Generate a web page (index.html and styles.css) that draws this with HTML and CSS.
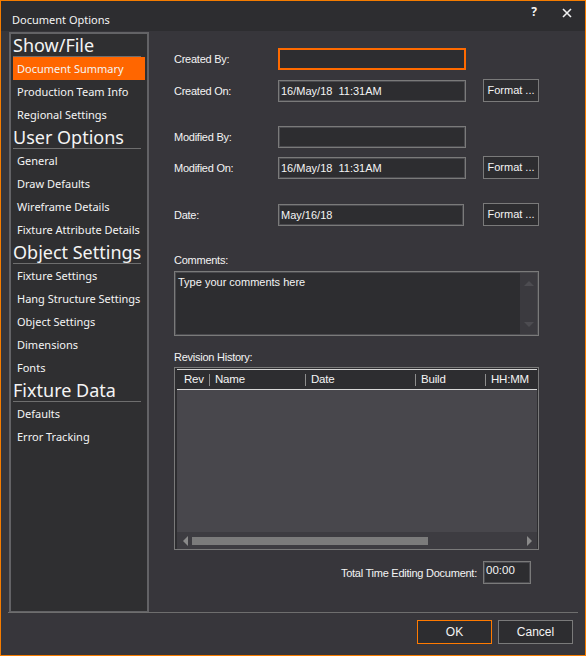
FILE: index.html
```html
<!DOCTYPE html>
<html lang="en">
  <head>
    <meta charset="UTF-8" />
    <meta name="viewport" content="width=device-width, initial-scale=1" />
    <title>Document Options</title>
    <link rel="stylesheet" href="styles.css">
  </head>
  <body>
    <div class="dialog">
      <div class="titlebar">
        <span class="title">Document Options</span>
        <span class="tb-help">?</span>
        <span class="tb-close">
          <svg width="10" height="10" viewBox="0 0 10 10">
            <path d="M1 1 L9 9 M9 1 L1 9" stroke="#f1f1f1" stroke-width="1.6" />
          </svg>
        </span>
      </div>

      <div class="content">
        <nav class="nav">
          <div class="nav-head">Show/File</div>
          <div class="nav-item selected">Document Summary</div>
          <div class="nav-item">Production Team Info</div>
          <div class="nav-item">Regional Settings</div>
          <div class="nav-head">User Options</div>
          <div class="nav-item">General</div>
          <div class="nav-item">Draw Defaults</div>
          <div class="nav-item">Wireframe Details</div>
          <div class="nav-item">Fixture Attribute Details</div>
          <div class="nav-head">Object Settings</div>
          <div class="nav-item">Fixture Settings</div>
          <div class="nav-item">Hang Structure Settings</div>
          <div class="nav-item">Object Settings</div>
          <div class="nav-item">Dimensions</div>
          <div class="nav-item">Fonts</div>
          <div class="nav-head">Fixture Data</div>
          <div class="nav-item">Defaults</div>
          <div class="nav-item">Error Tracking</div>
        </nav>

        <section class="form">
          <div class="row row-created-by">
            <span class="label">Created By:</span>
            <div class="field focus"></div>
          </div>
          <div class="row row-created-on">
            <span class="label">Created On:</span>
            <div class="field">16/May/18  11:31AM</div>
            <div class="btn-format">Format ...</div>
          </div>
          <div class="row row-modified-by">
            <span class="label">Modified By:</span>
            <div class="field"></div>
          </div>
          <div class="row row-modified-on">
            <span class="label">Modified On:</span>
            <div class="field">16/May/18  11:31AM</div>
            <div class="btn-format">Format ...</div>
          </div>
          <div class="row row-date">
            <span class="label">Date:</span>
            <div class="field short">May/16/18</div>
            <div class="btn-format">Format ...</div>
          </div>

          <div class="label block comments-label">Comments:</div>
          <div class="comments">
            <div class="comments-text">Type your comments here</div>
            <div class="vscroll">
              <svg width="10" height="6" viewBox="0 0 10 6"><polygon points="0,6 5,1 10,6" fill="#4d4c51" /></svg>
              <svg width="10" height="6" viewBox="0 0 10 6"><polygon points="0,0 5,5 10,0" fill="#4d4c51" /></svg>
            </div>
          </div>

          <div class="label block history-label">Revision History:</div>
          <div class="history">
            <div class="history-head">
              <span class="col col-rev">Rev</span>
              <span class="sep"></span>
              <span class="col col-name">Name</span>
              <span class="sep"></span>
              <span class="col col-date">Date</span>
              <span class="sep"></span>
              <span class="col col-build">Build</span>
              <span class="sep"></span>
              <span class="col col-time">HH:MM</span>
            </div>
            <div class="history-body"></div>
            <div class="hscroll">
              <svg width="6" height="10" viewBox="0 0 6 10"><polygon points="5,0 0,5 5,10" fill="#8a8a8a" /></svg>
              <div class="hthumb"></div>
              <svg width="6" height="10" viewBox="0 0 6 10"><polygon points="1,0 6,5 1,10" fill="#8a8a8a" /></svg>
            </div>
          </div>

          <div class="total-row">
            <span class="label">Total Time Editing Document:</span>
            <div class="field total">00:00</div>
          </div>
        </section>
      </div>

      <div class="footer">
        <div class="btn ok">OK</div>
        <div class="btn">Cancel</div>
      </div>
    </div>
  </body>
</html>
```

FILE: styles.css
```css
body {
  margin: 0;
  background: #37363b;
}

.dialog {
  width: 586px;
  height: 656px;
  box-sizing: border-box;
  border: 1px solid #f57c00;
  background: #37363b;
  display: flex;
  flex-direction: column;
  color: #f4f4f4;
  font-family: "Liberation Sans", Arial, sans-serif;
  font-size: 11px;
}

/* Title bar */
.titlebar {
  height: 30px;
  flex: none;
  display: flex;
  align-items: flex-start;
  background: #2d2d30;
  font-family: "Noto Sans", sans-serif;
}
.title {
  font-size: 11px;
  line-height: 15px;
  padding: 11px 0 0 11px;
  flex: 1;
}
.tb-help {
  font-size: 12px;
  font-weight: bold;
  line-height: 16px;
  padding-top: 3px;
  width: 14px;
  text-align: center;
  margin-right: 21px;
}
.tb-close {
  padding-top: 7px;
  width: 10px;
  margin-right: 13px;
}
.tb-close svg {
  display: block;
}

/* Main area */
.content {
  flex: 1;
  display: flex;
  min-height: 0;
}

.nav {
  width: 140px;
  box-sizing: border-box;
  margin: 1px 0 0 8px;
  padding: 0 2px;
  border: 2px solid #636366;
  border-bottom-width: 1px;
  background: #2f2f31;
  font-family: "Noto Sans", sans-serif;
}
.nav-head {
  font-size: 18px;
  line-height: 22px;
  height: 22px;
  margin-right: 4px;
  border-bottom: 1px solid #6e6e6e;
  white-space: nowrap;
}
.nav-item {
  height: 23px;
  line-height: 23px;
  padding-left: 4px;
  font-size: 11px;
  white-space: nowrap;
}
.nav-item.selected {
  background: #ff6600;
}

.form {
  flex: 1;
  padding: 17px 46px 0 25px;
}

.label {
  letter-spacing: -0.25px;
  white-space: nowrap;
}
.label.block {
  display: block;
  line-height: 14px;
}

.row {
  display: flex;
  align-items: center;
  height: 23px;
}
.row .label {
  width: 104px;
  flex: none;
}
.row-created-by {
  height: 22px;
}
.row-created-on {
  margin-top: 9px;
}
.row-modified-by {
  height: 22px;
  margin-top: 24px;
}
.row-modified-on {
  margin-top: 8px;
}
.row-date {
  margin-top: 24px;
}

.field {
  box-sizing: border-box;
  width: 188px;
  height: 22px;
  line-height: 20px;
  padding-left: 2px;
  border: 1px solid #7a7a7a;
  box-shadow: inset 0 0 0 1px #4a4a4e;
  background: #2d2d30;
  white-space: pre;
}
.field.focus {
  border: 2px solid #ff6a00;
  box-shadow: none;
}
.field.short {
  width: 186px;
}

.btn-format {
  box-sizing: border-box;
  width: 56px;
  height: 23px;
  line-height: 21px;
  margin-left: 17px;
  border: 1px solid #7a7a7a;
  background: #2d2d30;
  text-align: center;
  white-space: nowrap;
}
.row-date .btn-format {
  margin-left: 19px;
}

.comments-label {
  margin-top: 27px;
}
.comments {
  margin-top: 4px;
  height: 65px;
  box-sizing: border-box;
  border: 1px solid #7a7a7a;
  box-shadow: inset 0 0 0 1px #4a4a4e;
  background: #2d2d30;
  display: flex;
}
.comments-text {
  flex: 1;
  padding: 3px 0 0 3px;
  line-height: 14px;
}
.vscroll {
  width: 17px;
  margin: 1px 1px 1px 0;
  background: #3b3a3f;
  display: flex;
  flex-direction: column;
  justify-content: space-between;
  align-items: center;
  padding: 7px 0 6px;
}

.history-label {
  margin-top: 14px;
}
.history {
  margin-top: 3px;
  height: 183px;
  box-sizing: border-box;
  border: 1px solid #7a7a7a;
  padding: 1px 1px 0 2px;
  background: #2d2d30;
  display: flex;
  flex-direction: column;
}
.history-head {
  height: 19px;
  border-top: 1px solid #d8d8d8;
  border-bottom: 1px solid #d8d8d8;
  display: flex;
  align-items: center;
  white-space: nowrap;
  line-height: 17px;
}
.col {
  padding-left: 5px;
  box-sizing: border-box;
  letter-spacing: -0.2px;
  font-size: 11.5px;
}
.col-rev {
  width: 32px;
  padding-left: 7px;
}
.col-name {
  width: 95px;
}
.col-date {
  width: 109px;
}
.col-build {
  width: 69px;
}
.col-time {
  flex: 1;
}
.sep {
  width: 1px;
  height: 12px;
  background: #8e8e8e;
}
.history-body {
  flex: 1;
  background: #48474c;
}
.hscroll {
  height: 17px;
  background: #3d3c41;
  display: flex;
  align-items: center;
  padding: 0 5px 0 6px;
}
.hthumb {
  width: 236px;
  height: 8px;
  background: #7b7b7b;
  margin-left: 3px;
  margin-right: auto;
}

.total-row {
  display: flex;
  align-items: center;
  justify-content: flex-end;
  margin-top: 11px;
  padding-right: 8px;
}
.total-row .label {
  margin-right: 6px;
}
.field.total {
  width: 48px;
  height: 23px;
  line-height: 14px;
  padding: 1px 0 0 2px;
  font-size: 11.5px;
}

/* Footer */
.footer {
  flex: none;
  box-sizing: border-box;
  height: 43px;
  margin: 0 7px;
  border-top: 1px solid #6e6e6e;
  display: flex;
  justify-content: flex-end;
  align-items: flex-start;
  padding: 7px 5px 0 0;
  gap: 6px;
}
.btn {
  box-sizing: border-box;
  width: 75px;
  height: 24px;
  line-height: 22px;
  border: 1px solid #7a7a7a;
  background: #2d2d30;
  text-align: center;
  font-size: 12px;
}
.btn.ok {
  border-color: #ff7a00;
}
```
